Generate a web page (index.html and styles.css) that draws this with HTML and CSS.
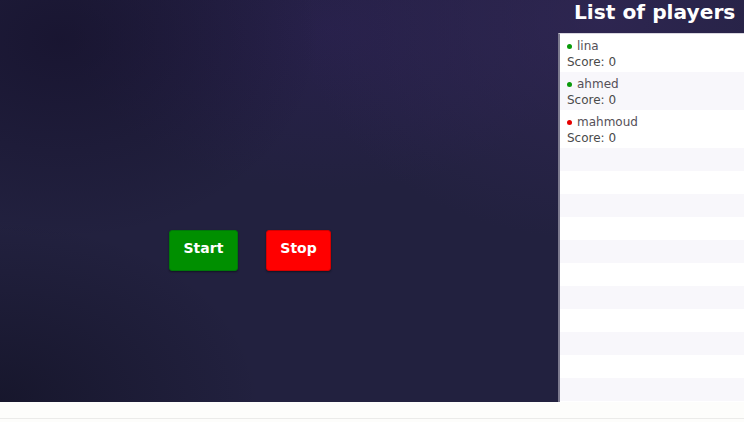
FILE: index.html
```html
<!DOCTYPE html>
<html>
<head>
<meta charset="utf-8">
<link rel="stylesheet" href="styles.css">
</head>
<body>
<div class="app">
  <main class="stage">
    <div class="controls">
      <button class="btn btn-start">Start</button>
      <button class="btn btn-stop">Stop</button>
    </div>
  </main>
  <aside class="players">
    <h2 class="players-title">List of players</h2>
    <ul class="player-list">
      <li class="player"><span class="name"><span class="dot dot-on"></span>lina</span><span class="score">Score: 0</span></li>
      <li class="player"><span class="name"><span class="dot dot-on"></span>ahmed</span><span class="score">Score: 0</span></li>
      <li class="player"><span class="name"><span class="dot dot-off"></span>mahmoud</span><span class="score">Score: 0</span></li>
      <li class="filler"></li>
      <li class="filler"></li>
      <li class="filler"></li>
      <li class="filler"></li>
      <li class="filler"></li>
      <li class="filler"></li>
      <li class="filler"></li>
      <li class="filler"></li>
      <li class="filler"></li>
      <li class="filler"></li>
      <li class="filler"></li>
    </ul>
  </aside>
</div>
<footer class="foot"></footer>
</body>
</html>
```

FILE: styles.css
```css
html, body {
  margin: 0;
  padding: 0;
  background: #fdfdfb;
  font-family: "DejaVu Sans", sans-serif;
}

.app {
  display: flex;
  height: 402px;
  overflow: hidden;
  background:
    radial-gradient(ellipse 260px 200px at 60px 40px, rgba(16, 10, 36, 0.5), rgba(16, 10, 36, 0) 100%),
    radial-gradient(ellipse 300px 220px at 600px 20px, rgba(52, 40, 90, 0.65), rgba(52, 40, 90, 0) 100%),
    radial-gradient(ellipse 260px 160px at 330px 30px, rgba(44, 32, 84, 0.55), rgba(44, 32, 84, 0) 100%),
    radial-gradient(ellipse 260px 180px at 0px 402px, rgba(12, 12, 26, 0.5), rgba(12, 12, 26, 0) 100%),
    #22213f;
}

.stage {
  width: 558px;
  flex: none;
}

.controls {
  display: flex;
  gap: 28px;
  padding: 230px 0 0 169px;
}

.btn {
  font-family: "DejaVu Sans", sans-serif;
  font-weight: bold;
  font-size: 14px;
  line-height: 17px;
  color: #fff;
  padding: 9px 13.5px 13px;
  border-radius: 3px;
  cursor: pointer;
  box-shadow: 0 1px 2px rgba(0, 0, 0, 0.45);
}

.btn-start {
  background: #008f00;
  border: 1px solid #00780a;
}

.btn-stop {
  background: #ff0000;
  border: 1px solid #d40000;
}

.players {
  flex: 1;
  display: flex;
  flex-direction: column;
}

.players-title {
  margin: 0;
  height: 33px;
  box-sizing: border-box;
  padding: 0 0 0 16px;
  font-size: 20.2px;
  font-weight: bold;
  line-height: 24px;
  color: #fff;
  white-space: nowrap;
}

.player-list {
  flex: 1;
  list-style: none;
  margin: 0;
  padding: 0;
  background: #fff;
  border-left: 2px solid #7c7a8e;
  border-top: 1px solid #d8d6df;
}

.player-list li:nth-child(even) {
  background: #f8f7fb;
}

.player {
  display: flex;
  flex-direction: column;
  padding: 4px 0 2px 7px;
  font-size: 12px;
  line-height: 16px;
  color: #4a4a4a;
  height: 32px;
}

.name {
  display: flex;
  align-items: center;
  color: #555058;
}

.dot {
  width: 5px;
  height: 5px;
  border-radius: 50%;
  margin-right: 5px;
}

.dot-on { background: #0a9a0a; }
.dot-off { background: #e60000; }

.filler {
  height: 23px;
}

.foot {
  height: 16px;
  border-bottom: 1px solid #ebebe9;
}
```
